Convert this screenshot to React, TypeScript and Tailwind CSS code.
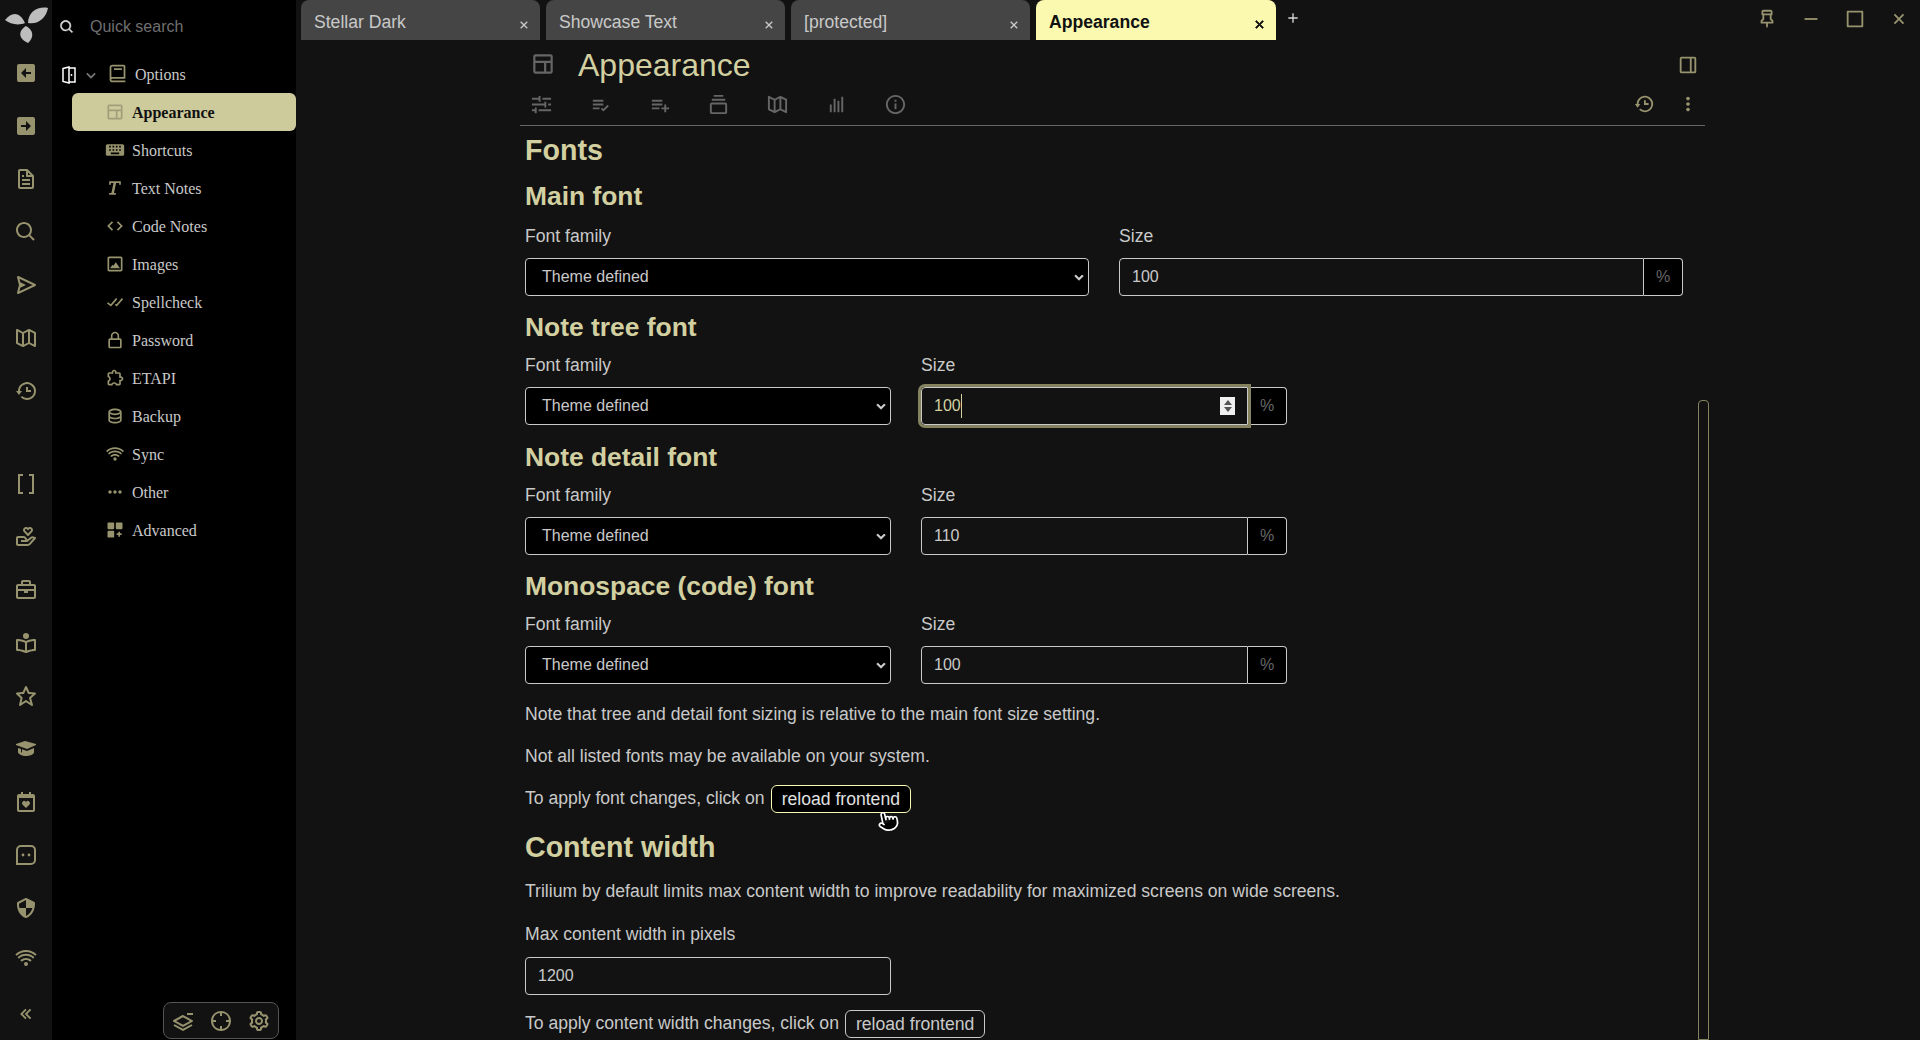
import React from 'react'
import { Pointer } from 'lucide-react'
import {
  BiBarChart, BiBook, BiBookReader, BiBriefcase, BiCalendarHeart, BiCheckDouble, BiChevronDown, BiChevronsLeft, BiCode, BiCog,
  BiCollection, BiCrosshair, BiData, BiDockRight, BiDonateHeart, BiDotsHorizontalRounded, BiDotsVerticalRounded, BiExtension,
  BiFile, BiHistory, BiImageAlt, BiInfoCircle, BiLayerMinus, BiLayout, BiListCheck, BiListPlus, BiLockAlt, BiMapAlt, BiMinus,
  BiPin, BiPlus, BiSearch, BiSend, BiShieldQuarter, BiSlider, BiSolidCustomize, BiSolidGraduation, BiSolidKeyboard,
  BiSolidLeftArrowSquare, BiSolidRightArrowSquare, BiSquare, BiStar, BiText, BiWifi, BiX,
} from 'react-icons/bi'

function BracketsIcon({ className }: { className?: string }) {
  return (
    <svg viewBox="0 0 24 24" className={className} fill="none" stroke="currentColor" strokeWidth="2">
      <path d="M9 3H5v18h4M15 3h4v18h-4" />
    </svg>
  )
}

function ChatDotsIcon({ className }: { className?: string }) {
  return (
    <svg viewBox="0 0 24 24" className={className} fill="none" stroke="currentColor" strokeWidth="2">
      <path d="M7 3h10a4 4 0 0 1 4 4v10a4 4 0 0 1-4 4H3V7a4 4 0 0 1 4-4Z" />
      <circle cx="9" cy="12" r="1.4" fill="currentColor" stroke="none" />
      <circle cx="15" cy="12" r="1.4" fill="currentColor" stroke="none" />
    </svg>
  )
}

function SplitIcon({ className }: { className?: string }) {
  return (
    <svg viewBox="0 0 14 18" className={className} fill="none" stroke="currentColor" strokeWidth="1.5">
      <path d="M1 2.5 7 1v16l-6-1.5ZM7 2h6v14H7" />
      <circle cx="9.5" cy="9" r="0.9" fill="currentColor" stroke="none" />
    </svg>
  )
}

const railTop = [BiSolidLeftArrowSquare, BiSolidRightArrowSquare, BiFile, BiSearch, BiSend, BiMapAlt, BiHistory]
const railBottom = [BracketsIcon, BiDonateHeart, BiBriefcase, BiBookReader, BiStar, BiSolidGraduation, BiCalendarHeart, ChatDotsIcon, BiShieldQuarter]

const optionItems = [
  { label: 'Shortcuts', icon: BiSolidKeyboard },
  { label: 'Text Notes', icon: BiText },
  { label: 'Code Notes', icon: BiCode },
  { label: 'Images', icon: BiImageAlt },
  { label: 'Spellcheck', icon: BiCheckDouble },
  { label: 'Password', icon: BiLockAlt },
  { label: 'ETAPI', icon: BiExtension },
  { label: 'Backup', icon: BiData },
  { label: 'Sync', icon: BiWifi },
  { label: 'Other', icon: BiDotsHorizontalRounded },
  { label: 'Advanced', icon: BiSolidCustomize },
]

const toolbarIcons = [BiSlider, BiListCheck, BiListPlus, BiCollection, BiMapAlt, BiBarChart, BiInfoCircle]

function Tab({ title, active }: { title: string; active?: boolean }) {
  return (
    <div className={active ? 'flex h-10 w-[240px] items-center justify-between rounded-t-lg bg-[#fbf9b0] pl-[13px] pr-[8px] font-bold text-[#111]' : 'flex h-10 w-[239px] items-center justify-between rounded-t-lg bg-[#454545] pl-[13px] pr-[8px] text-[#c9c9c9]'}>
      <span className="pt-[5px] text-[17.6px]">{title}</span>
      <BiX className={active ? 'mt-[9px] text-[17px] stroke-[1]' : 'mt-[9px] text-[16px]'} />
    </div>
  )
}

function FontRow({ wide, value, focused }: { wide?: boolean; value: string; focused?: boolean }) {
  return (
    <div className="flex gap-[30px]">
      <div className={wide ? 'w-[564px]' : 'w-[366px]'}>
        <div className="mb-[11px] h-[22px] text-[17.6px] leading-[22px]">Font family</div>
        <div className="flex h-[38px] items-center justify-between rounded border border-[#c9c9c9] bg-black pl-[16px] text-[16px]">
          Theme defined
          <BiChevronDown className="h-[18px] w-[18px] stroke-[1] text-[#d8d8d8]" />
        </div>
      </div>
      <div className={wide ? 'w-[564px]' : 'w-[366px]'}>
        <div className="mb-[11px] h-[22px] text-[17.6px] leading-[22px]">Size</div>
        <div className="flex h-[38px]">
          <div className={focused ? 'relative z-10 flex flex-1 items-center justify-between rounded-l border border-[#c9c9c9] pl-[12px] pr-[12px] text-[16px] text-[#d2d0a0] outline-[3px] outline-solid outline-[#85835f]' : 'flex flex-1 items-center rounded-l border border-[#c9c9c9] pl-[12px] text-[16px]'}>
            <span className={focused ? 'border-r border-[#d2d0a0]' : ''}>{value}</span>
            {focused && (
              <span className="flex h-[18px] w-[15px] flex-col items-center justify-center gap-[2px] bg-[#f0f0f0] text-[#555]">
                <span className="h-0 w-0 border-x-[4px] border-b-[5px] border-x-transparent border-b-[#555]" />
                <span className="h-0 w-0 border-x-[4px] border-t-[5px] border-x-transparent border-t-[#555]" />
              </span>
            )}
          </div>
          <div className="flex w-[39px] items-center justify-center rounded-r border border-l-0 border-[#c9c9c9] bg-black text-[16px] text-[#666]">%</div>
        </div>
      </div>
    </div>
  )
}

function ReloadButton({ hover }: { hover?: boolean }) {
  return (
    <span className={hover ? 'relative ml-[6px] inline-block h-[28px] rounded-md border border-[#fbf9b0] bg-black px-[10px] align-middle text-[17.6px] leading-[26px] text-[#e0e0e0]' : 'ml-[6px] inline-block h-[28px] rounded-md border border-[#c9c9c9] px-[10px] align-middle text-[17.6px] leading-[26px]'}>
      reload frontend
      {hover && <Pointer className="absolute left-[105px] top-[24px] h-[22px] w-[22px] -rotate-12 fill-black text-white" strokeWidth={1.8} />}
    </span>
  )
}

export default function App() {
  return (
    <div className="flex h-screen overflow-hidden bg-[#121212] font-['Liberation_Sans',sans-serif] text-[#c9c9c9]">
      {/* launcher rail */}
      <div className="flex w-[52px] shrink-0 flex-col items-center text-[#97936e]">
        <svg viewBox="0 0 52 48" className="h-[48px] w-[52px]" fill="#bdbdbd">
          <path d="M25 23C20 12 12 11 5 20c5 4 13 6 20 3Z" />
          <path d="M28 23C28 12 38 6 48 8c-2 10-10 17-20 15Z" />
          <path d="M26 26c-7 4-9 12 2 17 6-5 6-13-2-17Z" />
        </svg>
        <div className="mt-[13px] flex flex-col items-center gap-[29px]">
          {railTop.map((Icon, i) => <Icon key={i} className="h-[24px] w-[24px]" />)}
        </div>
        <div className="mt-[69px] flex flex-col items-center gap-[29px]">
          {railBottom.map((Icon, i) => <Icon key={i} className="h-[24px] w-[24px]" />)}
        </div>
        <BiWifi className="mt-[26px] h-[24px] w-[24px]" />
        <BiChevronsLeft className="mt-[33px] h-[22px] w-[22px]" />
      </div>

      {/* note tree */}
      <div className="relative w-[244px] shrink-0 bg-black font-['Liberation_Serif',serif] text-[16px]">
        <div className="flex h-[56px] items-center pb-[2px] pl-[7px] font-['Liberation_Sans',sans-serif] text-[#6f6f6f]">
          <BiSearch className="mr-[15px] h-[16px] w-[16px] stroke-[0.6] text-[#d8d8d8]" />
          Quick search
        </div>
        <div className="flex h-[37px] items-center pl-[10px]">
          <SplitIcon className="h-[18px] w-[14px] text-white" />
          <BiChevronDown className="ml-[5px] h-[20px] w-[20px] text-[#777]" />
          <BiBook className="ml-[6px] mr-[7px] h-[21px] w-[21px] -translate-y-[1px] text-[#97936e]" />
          Options
        </div>
        <div className="ml-[20px] flex h-[38px] items-center rounded-md bg-[#cdcb9c] pl-[33px] pt-[2px] font-bold text-[#111]">
          <BiLayout className="-mt-[3px] mr-[7px] h-[20px] w-[20px] text-[#a09e78]" />
          Appearance
        </div>
        {optionItems.map(({ label, icon: Icon }) => (
          <div key={label} className="ml-[20px] flex h-[38px] items-center pl-[33px] pt-[2px]">
            <Icon className="-mt-[3px] mr-[7px] h-[20px] w-[20px] text-[#97936e]" />
            {label}
          </div>
        ))}
        <div className="absolute bottom-[1px] left-[111px] flex h-[37px] w-[116px] items-center justify-center gap-[14px] rounded-lg border border-[#555] bg-[#121212] text-[#97936e]">
          <BiLayerMinus className="h-[24px] w-[24px]" />
          <BiCrosshair className="h-[24px] w-[24px]" />
          <BiCog className="h-[24px] w-[24px]" />
        </div>
      </div>

      {/* main */}
      <div className="flex min-w-0 flex-1 flex-col">
        <div className="flex h-10 shrink-0 items-start pl-[5px]">
          <div className="flex gap-[6px]">
            <Tab title="Stellar Dark" />
            <Tab title="Showcase Text" />
            <Tab title="[protected]" />
            <Tab title="Appearance" active />
          </div>
          <BiPlus className="ml-[9px] mt-[10px] h-[16px] w-[16px] text-[#d8d8d8]" />
          <div className="ml-auto mt-[8px] flex gap-[22px] pr-[10px] text-[#97936e]">
            <BiPin className="h-[22px] w-[22px]" />
            <BiMinus className="h-[22px] w-[22px]" />
            <BiSquare className="h-[22px] w-[22px]" />
            <BiX className="h-[22px] w-[22px]" />
          </div>
        </div>

        <div className="relative ml-[224px] w-[1185px] flex-1">
          <div className="border-b border-[#666]">
            <div className="flex h-[50px] items-center">
              <BiLayout className="-mt-[2px] ml-[10px] h-[26px] w-[26px] text-[#666]" />
              <span className="ml-[22px] text-[32px] text-[#d2d0a0]">Appearance</span>
              <BiDockRight className="ml-auto mr-[6px] h-[22px] w-[22px] text-[#97936e]" />
            </div>
            <div className="flex h-[35px] items-center pb-[7px] pl-[10px]">
              <div className="flex gap-[36px] text-[#666]">
                {toolbarIcons.map((Icon, i) => <Icon key={i} className="h-[23px] w-[23px]" />)}
              </div>
              <BiHistory className="ml-auto h-[22px] w-[22px] text-[#97936e]" />
              <BiDotsVerticalRounded className="ml-[22px] mr-[6px] h-[22px] w-[22px] text-[#97936e]" />
            </div>
          </div>

          <div className="pl-[5px] pt-[6px]">
            <h3 className="h-[36px] text-[28.6px] font-bold leading-[36px] text-[#d2d0a0]">Fonts</h3>
            <h4 className="mt-[11px] h-[34px] text-[26.4px] font-bold leading-[34px] text-[#d2d0a0]">Main font</h4>
            <div className="mt-[12px]"><FontRow wide value="100" /></div>
            <h4 className="mt-[14px] h-[34px] text-[26.4px] font-bold leading-[34px] text-[#d2d0a0]">Note tree font</h4>
            <div className="mt-[10px]"><FontRow value="100" focused /></div>
            <h4 className="mt-[15px] h-[34px] text-[26.4px] font-bold leading-[34px] text-[#d2d0a0]">Note detail font</h4>
            <div className="mt-[10px]"><FontRow value="110" /></div>
            <h4 className="mt-[14px] h-[34px] text-[26.4px] font-bold leading-[34px] text-[#d2d0a0]">Monospace (code) font</h4>
            <div className="mt-[10px]"><FontRow value="100" /></div>
            <p className="mt-[18px] h-[24px] text-[17.6px] leading-[24px]">Note that tree and detail font sizing is relative to the main font size setting.</p>
            <p className="mt-[18px] h-[24px] text-[17.6px] leading-[24px]">Not all listed fonts may be available on your system.</p>
            <div className="mt-[16px] h-[28px] text-[17.6px] leading-[28px]">
              To apply font changes, click on<ReloadButton hover />
            </div>
            <h4 className="mt-[18px] h-[34px] text-[28.6px] font-bold leading-[34px] text-[#d2d0a0]">Content width</h4>
            <p className="mt-[15px] h-[24px] text-[17.6px] leading-[24px]">Trilium by default limits max content width to improve readability for maximized screens on wide screens.</p>
            <p className="mt-[19px] h-[24px] text-[17.6px] leading-[24px]">Max content width in pixels</p>
            <div className="mt-[11px] flex h-[38px] w-[366px] items-center rounded border border-[#c9c9c9] pl-[12px] text-[16px]">1200</div>
            <div className="mt-[14px] h-[28px] text-[17.6px] leading-[28px]">
              To apply content width changes, click on<ReloadButton />
            </div>
          </div>
          {/* scrollbar thumb */}
          <div className="absolute bottom-0 left-[1178px] top-[360px] w-[11px] rounded-t border border-[#85835f]" />
        </div>
      </div>
    </div>
  )
}
